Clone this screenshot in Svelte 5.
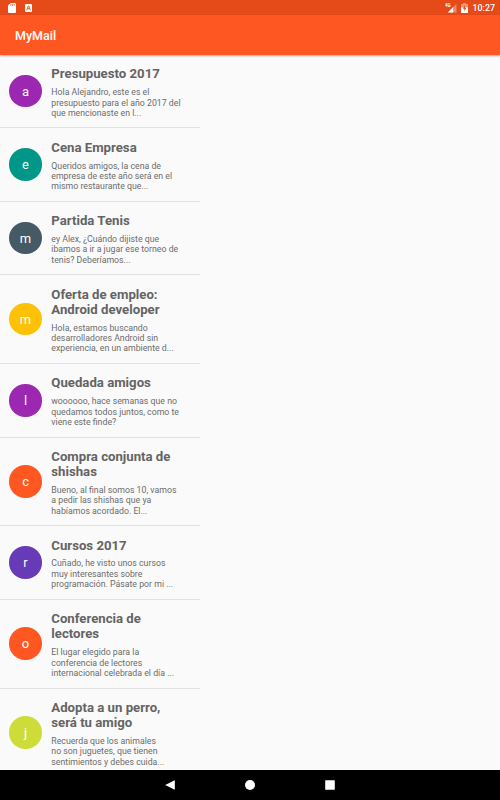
<script>
  const mails = [
    { initial: "a", color: "#9c27b0", title: ["Presupuesto 2017"], text: ["Hola Alejandro, este es el", "presupuesto para el año 2017 del", "que mencionaste en l..."] },
    { initial: "e", color: "#009688", title: ["Cena Empresa"], text: ["Queridos amigos, la cena de", "empresa de este año será en el", "mismo restaurante que..."] },
    { initial: "m", color: "#455a64", title: ["Partida Tenis"], text: ["ey Alex, ¿Cuándo dijiste que", "ibamos a ir a jugar ese torneo de", "tenis? Deberíamos..."] },
    { initial: "m", color: "#ffc107", title: ["Oferta de empleo:", "Android developer"], text: ["Hola, estamos buscando", "desarrolladores Android sin", "experiencia, en un ambiente d..."] },
    { initial: "l", color: "#9c27b0", title: ["Quedada amigos"], text: ["woooooo, hace semanas que no", "quedamos todos juntos, como te", "viene este finde?"] },
    { initial: "c", color: "#ff5722", title: ["Compra conjunta de", "shishas"], text: ["Bueno, al final somos 10, vamos", "a pedir las shishas que ya", "habíamos acordado. El..."] },
    { initial: "r", color: "#673ab7", title: ["Cursos 2017"], text: ["Cuñado, he visto unos cursos", "muy interesantes sobre", "programación. Pásate por mi ..."] },
    { initial: "o", color: "#ff5722", title: ["Conferencia de", "lectores"], text: ["El lugar elegido para la", "conferencia de lectores", "internacional celebrada el día ..."] },
    { initial: "j", color: "#cddc39", title: ["Adopta a un perro,", "será tu amigo"], text: ["Recuerda que los animales", "no son juguetes, que tienen", "sentimientos y debes cuida..."] },
  ];
</script>

<div class="screen">
  <div class="status">
    <svg class="sd" width="8" height="10" viewBox="0 0 8 10">
      <path d="M2.6 0H7a1 1 0 0 1 1 1v8a1 1 0 0 1-1 1H1a1 1 0 0 1-1-1V2.6z" fill="#fff" />
      <path d="M2.8 1.2v1.7M4.5 1.2v1.7M6.2 1.2v1.7" stroke="#e64a19" stroke-width=".8" />
    </svg>
    <svg class="debug" width="7" height="8" viewBox="0 0 7 8">
      <rect width="7" height="8" rx=".8" fill="#fff" />
      <path d="M1.7 6.2 3.2 2h.6l1.5 4.2M2.4 4.7h2.2" fill="none" stroke="#e64a19" stroke-width=".9" />
    </svg>
    <svg class="signal" width="12" height="10" viewBox="0 0 12 10">
      <path d="M11.5.8v8.7H2.8z" fill="#fff" opacity=".35" />
      <path d="M8.2 4.1v5.4H2.8z" fill="#fff" />
      <text x="0" y="4.1" fill="#fff">4G</text>
    </svg>
    <svg class="battery" width="7" height="10" viewBox="0 0 7 10">
      <path d="M2 0h3v1h2v4H0V1h2z" fill="#fff" opacity=".4" />
      <path d="M0 4.5h7V10H0z" fill="#fff" />
      <path d="M4 2.5 1.8 5.8h1.5v2.4l2-3.3H4z" fill="#e64a19" />
    </svg>
    <span class="clock">10:27</span>
  </div>

  <header>MyMail</header>

  <main>
    {#each mails as mail}
      <article>
        <div class="avatar" style:background={mail.color}>{mail.initial}</div>
        <div class="body">
          <h2>
            {#each mail.title as line}<span>{line}</span>{/each}
          </h2>
          <p>
            {#each mail.text as line}<span>{line}</span>{/each}
          </p>
        </div>
      </article>
    {/each}
  </main>

  <nav>
    <svg width="10" height="10" viewBox="0 0 10 10"><path d="M9.8.2v9.6L.2 5z" fill="#fff" /></svg>
    <svg width="10" height="10" viewBox="0 0 10 10"><circle cx="5" cy="5" r="5" fill="#fff" /></svg>
    <svg width="10" height="10" viewBox="0 0 10 10"><rect x=".2" y=".2" width="9.6" height="9.6" rx=".4" fill="#fff" /></svg>
  </nav>
</div>

<style>
  :global(body) {
    margin: 0;
  }

  .screen {
    display: flex;
    flex-direction: column;
    width: 500px;
    height: 800px;
    overflow: hidden;
    background: #fafafa;
    font-family: Roboto, sans-serif;
  }

  .status {
    display: flex;
    flex: none;
    align-items: center;
    box-sizing: border-box;
    height: 15px;
    padding: 0 5px 0 8px;
    background: #e64a19;
    color: #fff;
  }

  .debug {
    margin-left: 9px;
  }

  .signal {
    margin-left: auto;
  }

  .signal text {
    font-size: 4.5px;
    font-weight: 700;
  }

  .battery {
    margin: 0 4px 0 4px;
  }

  .clock {
    font-size: 8.9px;
    font-weight: 500;
    line-height: 15px;
    padding-top: 1px;
  }

  header {
    z-index: 1;
    flex: none;
    box-sizing: border-box;
    height: 40px;
    padding-left: 15px;
    background: #ff5722;
    box-shadow: 0 1px 2px rgba(0, 0, 0, 0.35);
    color: #fff;
    font-size: 12.5px;
    font-weight: 500;
    line-height: 41px;
  }

  main {
    flex: 1;
    width: 200px;
    min-height: 0;
    overflow: hidden;
  }

  article {
    display: flex;
    align-items: center;
    box-sizing: border-box;
    padding: 11.2px 0 9.3px 9.3px;
    border-bottom: 1px solid #e2e2e2;
  }

  .avatar {
    flex: none;
    width: 32.5px;
    height: 32.5px;
    margin: -2px 9.5px 0 0;
    border-radius: 50%;
    color: #fff;
    font-size: 13px;
    line-height: 33.5px;
    text-align: center;
  }

  h2,
  p {
    margin: 0;
    white-space: nowrap;
  }

  span {
    display: block;
  }

  h2 {
    color: #646464;
    font-size: 13.2px;
    font-weight: 700;
    line-height: 15.3px;
  }

  p {
    margin-top: 5.7px;
    color: #6c6c6c;
    font-size: 8.75px;
    line-height: 10.33px;
  }

  nav {
    display: flex;
    flex: none;
    align-items: center;
    justify-content: center;
    gap: 70px;
    height: 30px;
    background: #000;
  }
</style>
